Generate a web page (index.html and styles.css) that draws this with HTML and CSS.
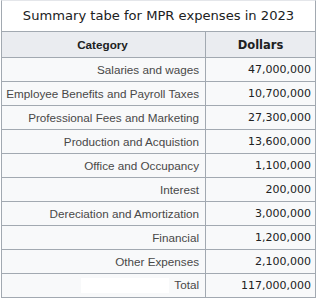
FILE: index.html
```html
<!DOCTYPE html>
<html lang="en">
<head>
  <meta charset="UTF-8" />
  <title>MPR expenses</title>
  <link rel="stylesheet" href="styles.css">
</head>
<body>
  <table class="summary">
    <caption>Summary tabe for MPR expenses in 2023</caption>
    <thead>
      <tr>
        <th class="cat">Category</th>
        <th class="num">Dollars</th>
      </tr>
    </thead>
    <tbody>
      <tr><td class="cat">Salaries and wages</td><td class="num">47,000,000</td></tr>
      <tr><td class="cat">Employee Benefits and Payroll Taxes</td><td class="num">10,700,000</td></tr>
      <tr><td class="cat">Professional Fees and Marketing</td><td class="num">27,300,000</td></tr>
      <tr><td class="cat">Production and Acquistion</td><td class="num">13,600,000</td></tr>
      <tr><td class="cat">Office and Occupancy</td><td class="num">1,100,000</td></tr>
      <tr><td class="cat">Interest</td><td class="num">200,000</td></tr>
      <tr><td class="cat">Dereciation and Amortization</td><td class="num">3,000,000</td></tr>
      <tr><td class="cat">Financial</td><td class="num">1,200,000</td></tr>
      <tr><td class="cat">Other Expenses</td><td class="num">2,100,000</td></tr>
      <tr>
        <td class="cat"><span class="blank"></span>Total</td>
        <td class="num">117,000,000</td>
      </tr>
    </tbody>
  </table>
</body>
</html>
```

FILE: styles.css
```css
* {
  box-sizing: border-box;
}

body {
  margin: 0;
  padding: 0 1px;
  background: #fff;
}

.summary {
  width: 315px;
  border-collapse: collapse;
  background: #f8f9fa;
  color: #202122;
}

caption {
  height: 31px;
  line-height: 30px;
  font-family: "DejaVu Sans", Verdana, sans-serif;
  font-size: 13.1px;
  background: #fff;
  border: 1px solid #a2a9b1;
  border-bottom: none;
  border-top-color: #e4e6ea;
}

th, td {
  border: 1px solid #a2a9b1;
  padding: 0 4px;
  height: 24px;
  white-space: nowrap;
}

th {
  background: #eaecf0;
  font-weight: bold;
  height: 26px;
  text-align: center;
}

.cat {
  width: 204px;
  padding-right: 6px;
  font-family: "Liberation Sans", Arial, sans-serif;
  font-size: 11.7px;
  color: #484848;
  text-align: right;
}

th.cat {
  text-align: center;
  color: #202122;
}

.num {
  font-family: "DejaVu Sans", Verdana, sans-serif;
  font-size: 11px;
  text-align: right;
}

th.num {
  text-align: center;
  font-size: 11.5px;
}

.blank {
  display: inline-block;
  width: 88px;
  height: 15px;
  background: #fff;
  vertical-align: middle;
  margin-right: 5px;
}
```
